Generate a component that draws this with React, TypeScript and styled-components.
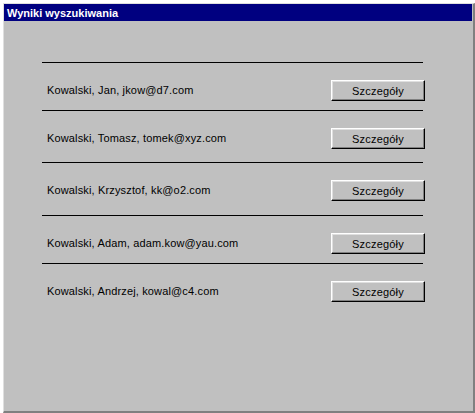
import React from "react";
import styled, { createGlobalStyle } from "styled-components";

const Global = createGlobalStyle`
  html, body { margin: 0; padding: 0; background: #ffffff; }
  body { font-family: "Liberation Sans", Arial, sans-serif; }
`;

const Window = styled.div`
  box-sizing: border-box;
  margin: 3px 0 0 3px;
  width: 472px;
  height: 410px;
  background: #c0c0c0;
  border-top: 1px solid #dfdfdf;
  border-left: 1px solid #dfdfdf;
  border-right: 2px solid #808080;
  border-bottom: 2px solid #808080;
  padding-right: 1px;
  display: flex;
  flex-direction: column;
`;

const TitleBar = styled.div`
  height: 17px;
  background: #000080;
  color: #ffffff;
  font: bold 11px "Liberation Sans", Arial, sans-serif;
  display: flex;
  align-items: center;
  padding-left: 3px;
`;

const List = styled.div`
  margin: 41px 0 0 38px;
  width: 381px;
  display: flex;
  flex-direction: column;
`;

const Row = styled.div<{ $h: number }>`
  box-sizing: border-box;
  height: ${(p) => p.$h}px;
  border-top: 1px solid #000000;
  padding: 17px 0 0 5px;
  display: flex;
  align-items: flex-start;
  justify-content: space-between;
`;

const Label = styled.span`
  font-size: 11px;
  color: #000000;
  line-height: 21px;
  letter-spacing: 0.15px;
`;

const Button = styled.button`
  box-sizing: border-box;
  width: 94px;
  height: 21px;
  margin-right: -2px;
  background: #c0c0c0;
  border-style: solid;
  border-width: 1px;
  border-color: #ffffff #000000 #000000 #ffffff;
  box-shadow: inset -1px -1px 0 #808080, inset 1px 1px 0 #dfdfdf;
  font: 11px "Liberation Sans", Arial, sans-serif;
  color: #000000;
  letter-spacing: 0.2px;
  padding: 0;
  cursor: pointer;
`;

const rows = [
  { text: "Kowalski, Jan, jkow@d7.com", h: 48 },
  { text: "Kowalski, Tomasz, tomek@xyz.com", h: 52 },
  { text: "Kowalski, Krzysztof, kk@o2.com", h: 53 },
  { text: "Kowalski, Adam, adam.kow@yau.com", h: 48 },
  { text: "Kowalski, Andrzej, kowal@c4.com", h: 48 },
];

export default function App() {
  return (
    <>
      <Global />
      <Window>
        <TitleBar>Wyniki wyszukiwania</TitleBar>
        <List>
          {rows.map((r) => (
            <Row key={r.text} $h={r.h}>
              <Label>{r.text}</Label>
              <Button>Szczegóły</Button>
            </Row>
          ))}
        </List>
      </Window>
    </>
  );
}
